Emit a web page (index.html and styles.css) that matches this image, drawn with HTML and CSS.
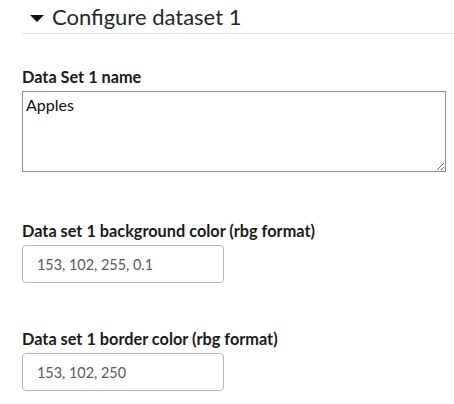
FILE: index.html
```html
<!DOCTYPE html>
<html lang="en">
<head>
    <meta charset="UTF-8">
    <meta name="viewport" content="width=device-width, initial-scale=1.0">
    <title>Configure dataset</title>
    <link rel="stylesheet" href="styles.css">
</head>
<body>
    <details class="dataset" open>
        <summary class="dataset-title">
            <span class="caret"></span>
            Configure dataset 1
        </summary>

        <div class="field field-first">
            <label class="field-label" for="name1">Data Set 1 name</label>
            <textarea class="field-area" id="name1">Apples</textarea>
        </div>

        <div class="field field-second">
            <label class="field-label" for="bg1">Data set 1 background color (rbg format)</label>
            <input class="field-input" id="bg1" type="text" value="153, 102, 255, 0.1">
        </div>

        <div class="field field-third">
            <label class="field-label" for="border1">Data set 1 border color (rbg format)</label>
            <input class="field-input" id="border1" type="text" value="153, 102, 250">
        </div>
    </details>
</body>
</html>
```

FILE: styles.css
```css
html, body {
    margin: 0;
    padding: 0;
    background: white;
    font-family: Lato, 'Open Sans', sans-serif;
    color: #1a1a1a;
}

.dataset {
    padding: 0 0 0 22px;
}

.dataset-title {
    list-style: none;
    display: flex;
    align-items: center;
    gap: 8px;
    height: 33px;
    padding-left: 8px;
    border-bottom: 1px solid #e6e6e6;
    font-size: 22px;
    color: #262626;
    cursor: pointer;
}

.dataset-title::-webkit-details-marker {
    display: none;
}

.caret {
    width: 0;
    height: 0;
    border-left: 7px solid transparent;
    border-right: 7px solid transparent;
    border-top: 7px solid #111;
    margin-top: 3px;
}

.field {
    display: flex;
    flex-direction: column;
    gap: 4px;
    padding-right: 8px;
}

.field-first {
    padding-top: 33px;
}

.field-second {
    padding-top: 49px;
}

.field-third {
    padding-top: 46px;
}

.field-label {
    font-size: 16.3px;
    font-weight: 700;
    line-height: 20px;
}

.field-area {
    box-sizing: border-box;
    width: 424px;
    height: 81px;
    margin: 0;
    border: 1px solid #8c9096;
    border-radius: 0;
    padding: 3px 3px;
    font-family: inherit;
    font-size: 16px;
    color: #111;
    resize: vertical;
}

.field-input {
    box-sizing: border-box;
    width: 202px;
    height: 38px;
    margin: 0;
    border: 1px solid #b3b6ba;
    border-radius: 4px;
    padding: 0 14px;
    font-family: inherit;
    font-size: 14.4px;
    color: #595959;
}
```
